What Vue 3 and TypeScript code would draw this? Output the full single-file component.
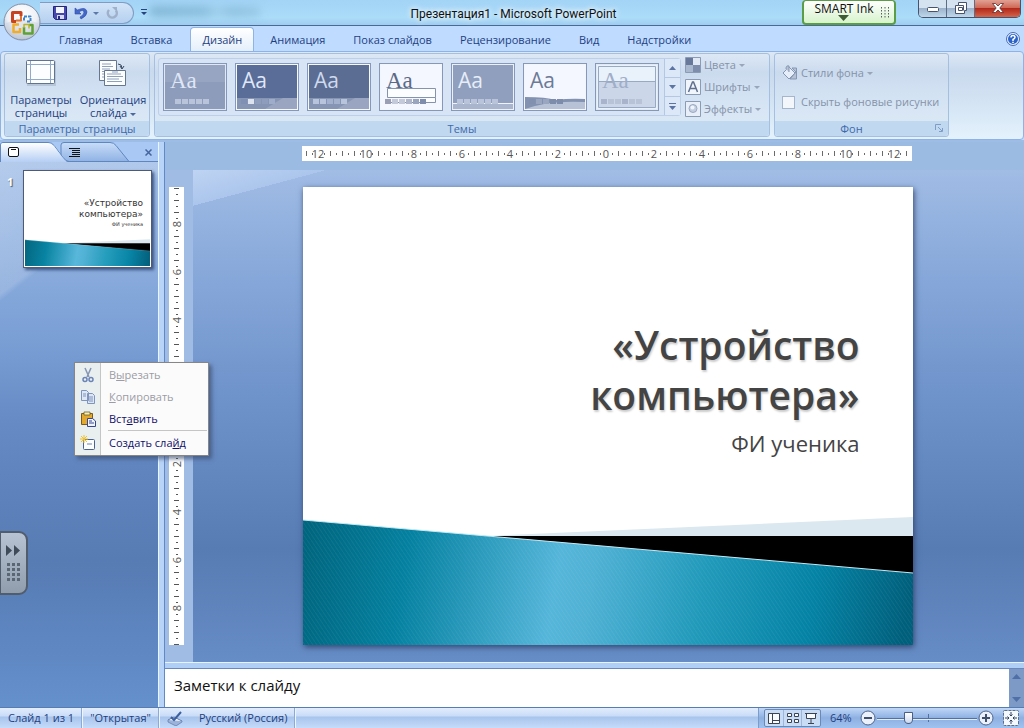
<script setup lang="ts">
import { ref } from 'vue'

interface Theme {
  name: string
  outer: string
  bg: string
  ink: string
  serif: boolean
  swatches: string[]
  kind: string
}

const tabs: string[] = ['Главная', 'Вставка', 'Дизайн', 'Анимация', 'Показ слайдов', 'Рецензирование', 'Вид', 'Надстройки']
const activeTab = ref<string>('Дизайн')
const hideBackground = ref<boolean>(false)
const notes = ref<string>('Заметки к слайду')
const zoom = ref<number>(30)

const pale = ['#b9c4da', '#b9c4da', '#b9c4da', '#b9c4da', '#b9c4da']
const themes: Theme[] = [
  { name: 'Тема 1', outer: '#dfe8f6', bg: '#97a5c3', ink: '#dfe7f6', serif: true, swatches: pale, kind: 'line' },
  { name: 'Тема 2', outer: '#f4f8ff', bg: '#5a6c98', ink: '#dfe7f8', serif: false, swatches: ['#8090b4', '#dde4f0', '#8f9dbd', '#8f9dbd', '#a0adca'], kind: 'fade' },
  { name: 'Тема 3', outer: '#f4f8ff', bg: '#5b6d92', ink: '#cfdaee', serif: false, swatches: ['#b8c3dc', '#b8c3dc', '#a3b0cd', '#a3b0cd', '#b8c3dc'], kind: 'fade' },
  { name: 'Тема 4', outer: '#f2f6ff', bg: '#f4f7ff', ink: '#5b6985', serif: true, swatches: ['#9a9fb4', '#c5cadb', '#c5cadb', '#b1b7cb', '#9aa5be', '#7e8dab'], kind: 'frame' },
  { name: 'Тема 5', outer: '#eaf1fc', bg: '#8f9fbd', ink: '#e6edf9', serif: false, swatches: ['#b9c4da', '#b9c4da', '#b9c4da', '#b9c4da', '#b9c4da', '#b9c4da'], kind: 'base' },
  { name: 'Тема 6', outer: '#f2f6ff', bg: '#f4f7ff', ink: '#6d7a96', serif: false, swatches: ['#8090ae', '#9aa6c0', '#9aa6c0', '#7d8cab', '#7d8cab'], kind: 'wave' },
  { name: 'Тема 7', outer: '#dfe9f7', bg: '#e9f1fb', ink: '#a0aec8', serif: true, swatches: ['#a9b3cb', '#b9c3d8', '#b9c3d8', '#a9b3cb', '#b9c3d8', '#b9c3d8'], kind: 'horizon' },
]

interface Tick { pos: number; tall: boolean }
interface Mark { pos: number; text: string }

function buildTicks(centre: number, limit: number): Tick[] {
  const out: Tick[] = []
  for (let d = -limit; d <= limit; d += 6) {
    if (d % 48 === 0) continue
    out.push({ pos: centre + d, tall: d % 12 === 0 })
  }
  return out
}
function buildMarks(centre: number, max: number): Mark[] {
  const out: Mark[] = []
  for (let n = -max; n <= max; n += 2) out.push({ pos: centre + n * 24, text: String(Math.abs(n)) })
  return out
}
const hTicks = buildTicks(304, 300)
const hMarks = buildMarks(304, 12)
const vTicks = buildTicks(229, 228)
const vMarks = buildMarks(229, 8)
</script>

<template>
  <div class="window">
    <header class="titlebar">
      <span class="blurred"></span>
      <div class="quick">
        <button class="ico" aria-label="Сохранить">
          <svg width="14" height="14" viewBox="0 0 14 14"><path d="M.5.5h13v13h-11l-2-2z" fill="#4747ad" stroke="#25257c" /><path d="M3 1h8v6H3z" fill="#f3f5ff" /><path d="M4 9h7v4H4z" fill="#d5daf0" /><path d="M5 10h2v3H5z" fill="#28287e" /></svg>
        </button>
        <button class="ico" aria-label="Отменить">
          <svg width="14" height="14" viewBox="0 0 14 14"><path d="M1 2v6h6L5 6q4-3 5 0 0 3-4 5l1 2q6-3 6-7Q12 0 3.500 4z" fill="#4567c8" stroke="#2c4aa8" stroke-width=".6" /></svg>
        </button>
        <span class="caret"></span>
        <button class="ico" aria-label="Повторить">
          <svg width="13" height="14" viewBox="0 0 13 14"><path d="M3 4A4.500 4.500 0 1 0 10 4.500" fill="none" stroke="#9fb0ca" stroke-width="2.500" /><path d="M6 1h5v5z" fill="#9fb0ca" /></svg>
        </button>
      </div>
      <button class="qmore" aria-label="Настройка панели"><svg width="6" height="6" viewBox="0 0 6 6"><path d="M0 0h6v1H0zM0 3h6L3 6z" fill="#24407c" /></svg></button>
      <h1 class="caption">Презентация1 - Microsoft PowerPoint</h1>
      <button class="smart">SMART Ink
        <svg class="smart-arrow" width="11" height="6" viewBox="0 0 11 6"><path d="M0 0h11L5.500 6z" fill="#3f5a35" /></svg>
        <svg class="smart-grip" width="9" height="12" viewBox="0 0 9 12"><g fill="#566060"><path v-for="n in 4" :key="n" :d="`M0 ${n * 3 - 3}h1v1.500H0zM3.500 ${n * 3 - 3}h1v1.500h-1zM7 ${n * 3 - 3}h1v1.500H7z`" /></g></svg>
      </button>
      <div class="winbtns">
        <button aria-label="Свернуть"><svg width="12" height="5" viewBox="0 0 12 5"><rect x=".5" y=".5" width="11" height="4" rx="1" fill="#fff" stroke="#47536b" /></svg></button>
        <button aria-label="Развернуть"><svg width="12" height="12" viewBox="0 0 12 12"><path d="M3.500.5h8v8h-2v3h-9v-8h3z" fill="#fff" stroke="#47536b" /><path d="M3.500 5.500h4v3h-4zM3.500 3.500h5v5" fill="none" stroke="#47536b" /></svg></button>
        <button class="close" aria-label="Закрыть"><svg width="12" height="10" viewBox="0 0 12 10"><path d="M.5.5h3L6 3 8.500.5h3L7.800 5l3.700 4.500h-3L6 7 3.500 9.500h-3L4.200 5z" fill="#fff" stroke="#5c2a2c" stroke-width=".8" /></svg></button>
      </div>
      <button class="orb" aria-label="Office">
        <svg width="38" height="38" viewBox="0 0 38 38">
          <defs><radialGradient id="orbFill" cx=".5" cy=".3" r=".75"><stop offset="0" stop-color="#fff" /><stop offset=".55" stop-color="#edf0f5" /><stop offset="1" stop-color="#a7b4c8" /></radialGradient></defs>
          <circle cx="19" cy="19" r="18" fill="url(#orbFill)" stroke="#8290a8" />
          <path d="M3 20q16-6 32 0-1 15-16 16Q4 35 3 20z" fill="#c9d1de" opacity=".45" />
          <g fill="none" stroke-linejoin="round">
            <path d="M18 13V9.500H9.500v9H13" stroke="#c8431f" stroke-width="3" /><path d="M18 13v4.500h-5" stroke="#e6732a" stroke-width="2" />
            <path d="M21 17.500v-4h6.500v5H23" stroke="#3f83cc" stroke-width="2" stroke-dasharray="3 1" />
            <path d="M16 21.500h-5.500v7.500H17V25" stroke="#f0ad2a" stroke-width="2.500" />
            <path d="M21 24v6.500h8.500V22H26" stroke="#5fa135" stroke-width="2.500" /><path d="M21 25v-3.500h5v4" stroke="#b9b52a" stroke-width="1.500" />
          </g>
        </svg>
      </button>
    </header>

    <nav class="tabs" role="tablist">
      <button v-for="t in tabs" :key="t" role="tab" class="tab" :class="{ active: t === activeTab }" :aria-selected="t === activeTab" @click="activeTab = t">{{ t }}</button>
      <button class="help" aria-label="Справка">
        <svg width="14" height="14" viewBox="0 0 14 14"><circle cx="7" cy="7" r="6.500" fill="#e9f2ff" stroke="#4569b4" /><circle cx="7" cy="7" r="5" fill="#2c63c8" /><path d="M5 5.500q0-2 2-2t2 1.800q0 1-2 2.200V9" fill="none" stroke="#fff" stroke-width="1.500" /><path d="M6.200 9.800h1.600v1.300H6.200z" fill="#fff" /></svg>
      </button>
    </nav>

    <section class="ribbon">
      <div class="group page">
        <div class="body">
          <button class="big">
            <svg width="32" height="28" viewBox="0 0 32 28"><path d="M2 2h29v25H2z" fill="#8b99b0" opacity=".35" /><rect x="1.500" y="1.500" width="28" height="23" rx="1" fill="#fcfdff" stroke="#62738d" /><path d="M5.500 2v22M25.500 2v22M2 5.500h27M2 20.500h27" stroke="#93a9c8" /></svg>
            <span>Параметры<br>страницы</span>
          </button>
          <button class="big">
            <svg width="30" height="28" viewBox="0 0 30 28"><g fill="#fbfdff" stroke="#66768e"><path d="M1.500 1.500h17v20h-17z" /><path d="M6.500 11.500h21v15h-21z" /></g><path d="M4 5h9M4 7.500h11M4 10h8M4 12.500h2M4 15h2M4 18h2M9 15h14M9 17.500h16M9 20h12M9 22.500h15M14 13h6" stroke="#8fa0ba" /><path d="M20 5q4 0 4 4m-2-2 2 3 2-3" fill="none" stroke="#38465e" /></svg>
            <span>Ориентация<br>слайда <i class="caret"></i></span>
          </button>
        </div>
        <footer>Параметры страницы</footer>
      </div>

      <div class="group themes">
        <div class="body">
          <div class="gallery">
            <button v-for="t in themes" :key="t.name" class="theme" :aria-label="t.name">
              <svg width="64" height="48" viewBox="0 0 64 48">
                <rect x=".5" y=".5" width="63" height="47" :fill="t.outer" stroke="#8798b6" />
                <rect x="2" y="2" width="60" height="44" :fill="t.bg" />
                <path v-if="t.kind === 'line'" d="M2 19h60v27H2z" fill="#8d9cbb" />
                <path v-if="t.kind === 'fade'" d="M2 35h60v11H2z" fill="#8795b4" />
                <path v-if="t.kind === 'fade'" d="M48 35h14v11H30z" fill="#a5b1ca" opacity=".6" />
                <path v-if="t.kind === 'base'" d="M2 40.500h60" stroke="#eff4fc" />
                <path v-if="t.kind === 'base'" d="M2 41h60v5H2z" fill="#a9b5cd" />
                <path v-if="t.kind === 'wave'" d="M2 34q22 0 30 3 16-2 30-1v10H2z" fill="#8292b0" />
                <path v-if="t.kind === 'wave'" d="M2 46q24-9 60-7v7z" fill="#b7c2d6" />
                <path v-if="t.kind === 'horizon'" d="M3.500 3.500h57v41h-57zM3 18.500h58" fill="none" stroke="#98a9c4" />
                <path v-if="t.kind === 'horizon'" d="M4 19h56v25H4z" fill="#cbd7e9" />
                <text x="7" y="25" :font-size="t.serif ? 23 : 21" :fill="t.ink" :font-family="t.serif ? 'Liberation Serif' : 'Open Sans'">Aa</text>
                <path v-if="t.kind === 'frame'" d="M8.500 25.500h48v9h-48zM8 39.500h48.500v-5" fill="#fcfdff" stroke="#8593ad" />
                <rect v-for="(s, i) in t.swatches" :key="i" :x="(t.kind === 'line' ? 12 : 6) + i * 7" y="36" width="6" height="5" :fill="s" />
              </svg>
            </button>
            <div class="scroller">
              <button aria-label="Вверх"><svg width="7" height="4" viewBox="0 0 7 4"><path d="M0 4h7L3.500 0z" /></svg></button>
              <button aria-label="Вниз"><svg width="7" height="4" viewBox="0 0 7 4"><path d="M0 0h7L3.500 4z" /></svg></button>
              <button aria-label="Ещё"><svg width="7" height="7" viewBox="0 0 7 7"><path d="M0 0h7v1H0zM0 3h7L3.500 7z" /></svg></button>
            </div>
          </div>
          <div class="opts">
            <button disabled><svg width="16" height="16" viewBox="0 0 16 16"><path d="M.5.5h15v15H.5z" fill="#dfe8f4" stroke="#8b9ab5" /><path d="M1 1h7v7H1z" fill="#67789a" /><path d="M8 8h7v7H8z" fill="#7d8dab" /><path d="M1 8h7v7H1z" fill="#a9b7cf" /></svg>Цвета <i class="caret"></i></button>
            <button disabled><svg width="16" height="16" viewBox="0 0 16 16"><path d="M.5.5h15v15H.5z" fill="#f1f6fd" stroke="#8b9ab5" /><path d="m3.500 13 4-10h1l4 10M5 9.500h6" fill="none" stroke="#5f7090" stroke-width="1.500" /></svg>Шрифты <i class="caret"></i></button>
            <button disabled><svg width="16" height="16" viewBox="0 0 16 16"><path d="M.5.5h15v15H.5z" fill="#e8eff9" stroke="#8b9ab5" /><circle cx="8" cy="7.500" r="4" fill="#c3cfe1" stroke="#9aa9c2" /><circle cx="7.500" cy="6.500" r="2" fill="#f0f5fc" /></svg>Эффекты <i class="caret"></i></button>
          </div>
        </div>
        <footer>Темы</footer>
      </div>

      <div class="group back">
        <div class="body">
          <button disabled class="styles"><svg width="16" height="16" viewBox="0 0 16 16"><path d="M1 8 7 2l6 6-6 6z" fill="#e6eef9" stroke="#8797b1" /><path d="M4 4q0-4 3-3v6M10 3h4.500v11H8l6-7z" fill="#b4c1d6" stroke="#8797b1" /></svg>Стили фона <i class="caret"></i></button>
          <label class="hide"><input v-model="hideBackground" type="checkbox" disabled>Скрыть фоновые рисунки</label>
        </div>
        <footer>Фон<button class="launcher" aria-label="Формат фона"><svg width="8" height="8" viewBox="0 0 8 8"><path d="M.5 6V.5H6M3 3l4 4M7.500 4v3.500H4" fill="none" stroke="#7f9cc6" /></svg></button></footer>
      </div>
    </section>

    <main class="work">
      <aside class="pane">
        <div class="pane-tabs">
          <svg class="pane-shape" width="158" height="20" viewBox="0 0 158 20">
            <defs><linearGradient id="tabOn" x1="0" y1="0" x2="0" y2="1"><stop offset="0" stop-color="#fff" /><stop offset="1" stop-color="#b5cff4" /></linearGradient><linearGradient id="tabOff" x1="0" y1="0" x2="0" y2="1"><stop offset="0" stop-color="#c9ddf8" /><stop offset="1" stop-color="#8fb2e4" /></linearGradient></defs>
            <path d="M0 0h158v19H0z" fill="#a9c8f3" /><path d="M61 19.500V3q0-2.500 3-2.500h46q4 0 6 3l13 16z" fill="url(#tabOff)" stroke="#5f86bf" /><path d="M.5 20V3Q.5.500 3 .5h45q4 0 6 3l9 12q3 4 6 4H158" fill="none" stroke="#5f86bf" /><path d="M1 20V3q0-2 2-2h45q3 0 6 3l9 12q3 4 5 4z" fill="url(#tabOn)" />
          </svg>
          <button class="p1" aria-label="Слайды"><svg width="11" height="10" viewBox="0 0 11 10"><rect x=".5" y=".5" width="10" height="9" rx="1.500" fill="#fff" stroke="#111" /><path d="M3 2.500h5" stroke="#111" /></svg></button>
          <button class="p2" aria-label="Структура"><svg width="11" height="9" viewBox="0 0 11 9"><path d="M0 .5h11M3 2.500h8M3 4.500h8M3 6.500h8M0 8.500h11" stroke="#111" /></svg></button>
          <button class="p3" aria-label="Закрыть область"><svg width="7" height="7" viewBox="0 0 7 7"><path d="m.5.5 6 6m0-6-6 6" stroke="#44659d" stroke-width="1.500" /></svg></button>
        </div>
        <div class="thumbs">
          <b>1</b>
          <div class="thumb">
            <p class="t1">«Устройство<br>компьютера»</p>
            <p class="t2">ФИ ученика</p>
            <svg viewBox="0 0 610 129" preserveAspectRatio="none"><use href="#wave" /></svg>
          </div>
        </div>
      </aside>

      <section class="editor">
        <div class="hrow">
          <svg class="hruler" width="610" height="15" viewBox="0 0 610 15">
            <path d="M0 0h610v15H0z" fill="#fff" />
            <path v-for="t in hTicks" :key="t.pos" :d="t.tall ? `M${t.pos + .5} 5v5` : `M${t.pos + .5} 7v2`" stroke="#6a6a6a" />
            <g v-for="m in hMarks" :key="m.pos"><text :x="m.pos" y="12" class="num">{{ m.text }}</text></g>
          </svg>
        </div>
        <div class="vcol">
          <svg width="15" height="458" viewBox="0 0 15 458">
            <path d="M0 0h15v458H0z" fill="#fff" />
            <path v-for="t in vTicks" :key="t.pos" :d="t.tall ? `M5 ${t.pos + .5}h5` : `M7 ${t.pos + .5}h2`" stroke="#555" />
            <g v-for="m in vMarks" :key="m.pos" :transform="`translate(12 ${m.pos}) rotate(-90)`"><text x="0" y="0" class="num">{{ m.text }}</text></g>
          </svg>
        </div>
        <div class="canvas">
          <article class="slide">
            <div class="texts">
              <h2>«Устройство<br>компьютера»</h2>
              <p>ФИ ученика</p>
            </div>
            <svg class="wave" viewBox="0 0 610 129" preserveAspectRatio="none">
              <defs>
                <linearGradient id="teal" gradientUnits="userSpaceOnUse" x1="0" y1="30" x2="600" y2="130"><stop offset="0" stop-color="#00657e" /><stop offset=".17" stop-color="#0481a0" /><stop offset=".42" stop-color="#55b6da" /><stop offset=".48" stop-color="#4fb1d4" /><stop offset=".66" stop-color="#219aba" /><stop offset=".84" stop-color="#0483a5" /><stop offset="1" stop-color="#005f7b" /></linearGradient>
                <pattern id="grain" width="4" height="6" patternUnits="userSpaceOnUse"><path d="m0 0 4 6" stroke="#fff" stroke-width=".6" opacity=".1" /></pattern>
                <g id="wave"><path d="M185 20 610 1v20H185z" fill="#dbe8ef" /><path d="M180 20h430v40z" fill="#000" /><path d="m0 4 610 53v72H0z" fill="url(#teal)" /><path d="m0 4 610 53v72H0z" fill="url(#grain)" /><path d="m0 4 610 53" stroke="#c4eaf4" /></g>
              </defs>
              <use href="#wave" />
            </svg>
          </article>
        </div>
        <div class="notes">
          <textarea v-model="notes" aria-label="Заметки к слайду"></textarea>
          <div class="nscroll"><svg width="9" height="5" viewBox="0 0 9 5"><path d="M0 5h9L4.500 0z" fill="#4f6fa6" /></svg><svg width="9" height="5" viewBox="0 0 9 5"><path d="M0 0h9L4.500 5z" fill="#4f6fa6" /></svg></div>
        </div>
      </section>

      <button class="drawer" aria-label="Развернуть панель">
        <svg width="15" height="37" viewBox="0 0 15 37"><path d="m0 0 6 5.500L0 11zM8 0l6 5.500L8 11z" fill="#404b5a" /><g fill="#5b6675"><path v-for="n in 4" :key="n" :d="`M1 ${n * 5 + 13}h3v3H1zM6 ${n * 5 + 13}h3v3H6zM11 ${n * 5 + 13}h3v3h-3z`" /></g></svg>
      </button>

      <div class="menu" role="menu">
        <button role="menuitem" disabled><svg width="16" height="16" viewBox="0 0 16 16"><path d="m5 1 4 9M11 1 7 10" stroke="#8495b5" stroke-width="1.500" /><circle cx="5" cy="12.500" r="2" fill="none" stroke="#6a84b8" stroke-width="1.500" /><circle cx="11" cy="12.500" r="2" fill="none" stroke="#6a84b8" stroke-width="1.500" /></svg><span>В<u>ы</u>резать</span></button>
        <button role="menuitem" disabled><svg width="16" height="16" viewBox="0 0 16 16"><path d="M1.500 1.500h5l2 2v8h-7zM7.500 4.500h5l2 2v8h-7z" fill="#dde6f4" stroke="#7e93bd" /><path d="M3 5h3M3 7h3M9 8h4M9 10h4M9 12h4" stroke="#7e93bd" /></svg><span><u>К</u>опировать</span></button>
        <button role="menuitem"><svg width="16" height="16" viewBox="0 0 16 16"><path d="M1.500 2.500h11v11h-11z" fill="#e2a92e" stroke="#7d5b14" /><path d="M4 1h6v3H4z" fill="#f7efb8" stroke="#6d6128" stroke-width=".8" /><path d="M7.500 7.500h5l3 2.500v5.500h-8z" fill="#f0f4ff" stroke="#38478e" /><path d="M9 10h3M9 12h5" stroke="#38478e" /></svg><span>Вст<u>а</u>вить</span></button>
        <hr>
        <button role="menuitem"><svg width="16" height="16" viewBox="0 0 16 16"><rect x="3.500" y="4.500" width="11" height="10" rx="1" fill="#fbfdff" stroke="#4c628e" /><path d="M7 9h5" stroke="#6f83ab" /><path d="M4 0v8M0 4h8M1 1l6 6M7 1 1 7" stroke="#f0c22e" /></svg><span>Создать сла<u>й</u>д</span></button>
      </div>
    </main>

    <footer class="status">
      <span class="cell">Слайд 1 из 1</span>
      <span class="cell">"Открытая"</span>
      <button class="cell lang"><svg width="16" height="15" viewBox="0 0 16 15"><path d="m1 9 6-3 8 4-6 4z" fill="#fff" stroke="#5d77a8" /><path d="M1 9v2l8 4 6-4v-1" fill="#9cb4db" stroke="#5d77a8" stroke-width=".7" /><path d="m4 6 3 3 7-8" fill="none" stroke="#3d5f9f" stroke-width="2" /></svg><span>Русский (Россия)</span></button>
      <div class="right">
        <div class="views">
          <button aria-label="Обычный"><svg width="12" height="11" viewBox="0 0 12 11"><path d="M.5.5h11v10H.5zM4.500 1v9M5 7.500h6" fill="#f8fbff" stroke="#3c4350" /></svg></button>
          <button aria-label="Сортировщик"><svg width="12" height="11" viewBox="0 0 12 11"><path d="M.5.5h4v3h-4zM7.500.5h4v3h-4zM.5 6.500h4v3h-4zM7.500 6.500h4v3h-4z" fill="#f8fbff" stroke="#3c4350" /></svg></button>
          <button aria-label="Показ"><svg width="12" height="11" viewBox="0 0 12 11"><path d="M0 .5h12M1.500 1v4.500h9V1M6 6v4M3 10.500h6" fill="#f8fbff" stroke="#3c4350" /></svg></button>
        </div>
        <span class="pct">64%</span>
        <button aria-label="Уменьшить"><svg width="16" height="16" viewBox="0 0 16 16"><circle cx="8" cy="8" r="7" fill="#eaf1fb" stroke="#4f658c" /><path d="M4 8h8" stroke="#3f4f6c" stroke-width="2" /></svg></button>
        <input v-model="zoom" class="zoom" type="range" min="0" max="100" aria-label="Масштаб">
        <button aria-label="Увеличить"><svg width="16" height="16" viewBox="0 0 16 16"><circle cx="8" cy="8" r="7" fill="#eaf1fb" stroke="#4f658c" /><path d="M4 8h8M8 4v8" stroke="#3f4f6c" stroke-width="2" /></svg></button>
        <button class="fit" aria-label="Вписать"><svg width="16" height="16" viewBox="0 0 16 16"><rect x=".5" y=".5" width="15" height="15" rx="1" fill="#f4f8ff" stroke="#5a6d8f" stroke-dasharray="3 1" /><path d="M8 2v4M6.500 4.500 8 6l1.500-1.500M8 14v-4M6.500 11.500 8 10l1.500 1.500M2 8h4M4.500 6.500 6 8 4.500 9.500M14 8h-4M11.500 6.500 10 8l1.500 1.500" fill="none" stroke="#34415a" /></svg></button>
      </div>
    </footer>
  </div>
</template>

<style>
html, body { margin: 0; overflow: hidden; }
</style>

<style scoped>
* { box-sizing: border-box; }
.window { display: flex; flex-direction: column; height: 100vh; font: 11px/14px "Open Sans", "Noto Sans", sans-serif; color: #1e3f7f; background: #bfdbff; }
button { font: inherit; color: inherit; background: none; border: 0; padding: 0; margin: 0; display: flex; align-items: center; justify-content: center; }
svg { display: block; flex: none; }
.caret { display: inline-block; border: 3px solid transparent; border-top-color: currentColor; border-bottom: 0; vertical-align: middle; opacity: .75; }

.titlebar { position: relative; display: flex; align-items: flex-start; height: 26px; padding: 0 3px 0 40px; background: linear-gradient(#a3d3f6, #abdcf8 70%, #9fcdf0); border-bottom: 1px solid #4a6a96; }
.quick { display: flex; align-items: center; gap: 7px; width: 94px; height: 22px; margin-top: 2px; padding-left: 13px; border: 1px solid #7f9dc4; border-left: 0; border-radius: 0 11px 11px 0; background: linear-gradient(#d3e4f8, #b4d0f0); }
.quick .caret { margin-left: -2px; color: #3b5590; }
.qmore { margin: 9px 0 0 7px; }
.blurred { position: absolute; left: 150px; top: 6px; width: 110px; height: 11px; background: linear-gradient(90deg, #6aa0c0, #75abc9 50%, #9acbe6 60%, #7fb3d0 75%, #8fc1dd); opacity: .6; filter: blur(4px); }
.caption { flex: 1; margin: 7px 0 0; padding-left: 78px; text-align: center; font: 12px/14px Roboto, "Noto Sans", sans-serif; color: #111; text-shadow: 0 0 6px #fff, 0 0 6px #fff; }
.smart { position: relative; width: 94px; height: 25px; margin-right: 22px; padding: 0 10px 6px 0; font-size: 12px; color: #111; background: linear-gradient(#fff, #d6f3cb); border: 2px solid #5b9d47; border-top-width: 1px; border-radius: 4px; }
.smart-arrow { position: absolute; left: 34px; top: 14px; }
.smart-grip { position: absolute; right: 4px; top: 6px; }
.winbtns { display: flex; width: 103px; height: 18px; border: 1px solid #44546e; border-top: 0; border-radius: 0 0 5px 5px; overflow: hidden; }
.winbtns button { width: 28px; background: linear-gradient(#d5e3f1 45%, #9cb3cb 50%, #c0d8ea); border-right: 1px solid #5c6d86; padding-bottom: 1px; }
.winbtns button:first-child { padding-top: 3px; }
.winbtns .close { flex: 1; border: 0; background: linear-gradient(#e2a193, #cf6a57 45%, #b3291b 50%, #d3654a); }
.orb { position: absolute; left: 3px; top: 3px; z-index: 3; }

.tabs { position: relative; display: flex; height: 25px; padding-left: 45px; background: #bfdbff; }
.tab { height: 24px; margin-top: 1px; padding: 0 13px; border: 1px solid transparent; border-bottom: 0; }
.tab.active { padding: 0 11px; margin: 1px 2px 0 4px; background: linear-gradient(#fff, #e4effb); border-color: #8fb3e2; border-radius: 4px 4px 0 0; }
.help { margin-left: auto; margin-right: 4px; }

.ribbon { display: flex; gap: 4px; height: 89px; padding: 1px 3px 2px; border: 1px solid #8db2e3; border-radius: 4px; background: linear-gradient(#dde8f5, #c9daee 22%, #d2e1f2 50%, #e3f2fc); }
.group { display: flex; flex-direction: column; border: 1px solid #a4bfdf; border-radius: 3px; background: linear-gradient(#dde8f5, #cbdbee 22%, #d3e2f3 50%, #deebf7); }
.group .body { flex: 1; display: flex; min-height: 0; }
.group footer { position: relative; height: 15px; line-height: 15px; text-align: center; color: #3e6aaa; background: #c1d8f1; border-radius: 0 0 3px 3px; }
.page { width: 146px; }
.big { flex: 1; flex-direction: column; justify-content: flex-start; gap: 6px; padding-top: 5px; line-height: 13px; }
.themes { flex: 0 1 616px; }
.gallery { display: flex; gap: 8px; align-items: center; height: 58px; margin: 4px 0 0 3px; padding-left: 4px; border: 1px solid #bdd0ea; border-radius: 3px; background: #d6e4f5; }
.scroller { display: flex; flex-direction: column; width: 16px; height: 56px; margin-left: -3px; border-left: 1px solid #b4c8e4; }
.scroller button { flex: 1; border-bottom: 1px solid #b4c8e4; background: #dce8f7; }
.scroller button:last-child { border: 0; }
.scroller path { fill: #5b74a2; }
.opts { display: flex; flex-direction: column; gap: 6px; padding: 3px 0 0 4px; color: #8592a8; }
.opts button, .styles { justify-content: flex-start; gap: 3px; white-space: nowrap; color: #8592a8; height: 16px; }
.back { width: 175px; }
.back .body { flex-direction: column; gap: 14px; padding: 11px 7px; color: #8592a8; }
.back footer { padding-right: 20px; }
.hide { display: flex; align-items: center; gap: 6px; white-space: nowrap; }
.hide input { appearance: none; flex: none; width: 13px; height: 13px; margin: 0; border: 1px solid #a4b5cc; background: #f3f7fc; }
.launcher { position: absolute; right: 5px; top: 3px; }

.work { position: relative; flex: 1; display: flex; min-height: 0; padding-top: 2px; background: #9dbde6; }
.pane { width: 165px; border-right: 1px solid #6289c6; box-shadow: inset -5px 0 #b9d4f9, inset -6px 0 #e9f5ff; background: linear-gradient(142deg, #ffffff38 0, #ffffff28 22%, transparent 23%), linear-gradient(#a5c1e9, #7a9fd5 35%, #658ac4 50%, #577bb3 74%, #6490cc); }
.pane-tabs { position: relative; width: 158px; height: 20px; display: flex; align-items: center; }
.pane-shape { position: absolute; left: 0; top: 0; }
.pane-tabs button { position: relative; height: 20px; }
.p1 { padding-left: 8px; }
.p2 { margin-left: 50px; }
.p3 { margin-left: auto; padding-right: 6px; }
.thumbs { display: flex; gap: 8px; padding: 8px 0 0 7px; }
.thumbs b { width: 8px; margin-top: 5px; color: #fff; text-shadow: 1px 1px 1px #456; }
.thumb { display: flex; flex-direction: column; width: 129px; height: 98px; padding: 27px 1px 1px; background: #fff; border: 1px solid #4f5b75; box-shadow: 2px 2px 3px #3a5280; text-align: right; color: #333; }
.thumb p { margin: 0 7px 0 0; }
.t1 { font: 9px/11px "DejaVu Sans", sans-serif; }
.t2 { font: 5px/8px "DejaVu Sans", sans-serif; }
.thumb svg { width: 125px; height: 27px; margin-top: auto; }

.editor { flex: 1; min-width: 0; display: grid; grid-template: 28px minmax(0, 1fr) 45px / 28px minmax(0, 1fr); }
.hrow { grid-column: 1 / 3; padding: 4px 3px 0 28px; display: flex; justify-content: center; background: #9bbbe3; }
.vcol { padding: 17px 0 0 4px; background: #a0bbe4; }
.num { font: 11px "Open Sans", sans-serif; fill: #555; text-anchor: middle; }
.canvas { display: flex; justify-content: center; align-items: flex-start; padding: 17px 2px 0 0; background: linear-gradient(165deg, #bfd4f3 0, #abc5ec 5%, transparent 5%), linear-gradient(#a1bce5, #88a9da 20%, #6f93cb 45%, #577bb3 77%, #678dc6); overflow: hidden; }
.slide { display: flex; flex-direction: column; justify-content: space-between; width: 610px; height: 458px; background: #fff; box-shadow: 1px 2px 6px #33466f; }
.texts { padding: 133px 53px 0 0; text-align: right; color: #444; }
.texts h2 { margin: 0; font: 600 39px/50px "Open Sans", sans-serif; text-shadow: 1px 2px 2px #ccc; }
.texts p { margin: 7px 0 0; font: 22px/32px "Open Sans", sans-serif; }
.wave { width: 100%; height: 129px; }
.notes { grid-column: 1 / 3; display: flex; border-top: 1px solid #e6f4ff; background: #fff; box-shadow: inset 0 5px #b0cff6, inset 0 6px #6a88bf; padding-top: 6px; }
.notes textarea { flex: 1; border: 0; outline: 0; resize: none; padding: 4px 9px; font: 15px/24px "Open Sans", sans-serif; color: #111; background: transparent; }
.nscroll { width: 15px; display: flex; flex-direction: column; justify-content: space-between; align-items: center; padding: 5px 0; background: #7d9ac6; }

.drawer { position: absolute; left: 0; top: 391px; width: 28px; height: 64px; border: 2px solid #515c6c; border-left-width: 1px; border-radius: 0 9px 9px 0; background: linear-gradient(#b7c3d2, #8f9dad); }
.menu { position: absolute; left: 74px; top: 222px; width: 135px; padding: 1px; border: 1px solid #868686; background: linear-gradient(90deg, #e9eeee 25px, #c5c5c5 25px, #c5c5c5 26px, #fbfbfb 26px); box-shadow: 3px 3px 4px #3b4c6daa; color: #10106a; }
.menu button { width: 100%; height: 22px; justify-content: flex-start; gap: 13px; padding-left: 4px; }
.menu button:disabled { color: #9c9ca6; }
.menu hr { height: 1px; margin: 0 0 1px 32px; border: 0; background: #c5c5c5; }

.status { display: flex; height: 21px; border-top: 1px solid #567db1; background: linear-gradient(#e2edfc, #c9dcf7 40%, #a8c4ec 45%, #c5dcfa); }
.cell { display: flex; align-items: center; padding: 0 7px 0 8px; border-right: 1px solid #8aabd8; box-shadow: 1px 0 #eef5ff; }
.cell.lang { gap: 16px; }
.right { display: flex; align-items: center; margin-left: auto; padding: 0 5px; border-left: 1px solid #7c9cca; background: linear-gradient(#c0d7f7, #8db0e2 50%, #a0c2f0); }
.views { display: flex; width: 57px; height: 18px; margin-right: 9px; border: 1px solid #6a89b8; border-radius: 2px; background: #c9dcf6; }
.views button { flex: 1; border-right: 1px solid #9cb6dc; }
.views button:last-child { border: 0; }
.pct { width: 30px; }
.zoom { appearance: none; width: 100px; height: 16px; margin: 0 1px; background: linear-gradient(#52719f, #52719f) 0 8px / 100% 1px no-repeat, linear-gradient(#dfeafb, #dfeafb) 0 9px / 100% 1px no-repeat, linear-gradient(#52719f, #52719f) 51px 4px / 1px 8px no-repeat; }
.zoom::-webkit-slider-thumb { appearance: none; width: 9px; height: 12px; background: linear-gradient(#fff, #cbd9ee); border: 1px solid #4a5f86; border-radius: 1px 1px 5px 5px; }
.fit { margin-left: 9px; }
</style>
